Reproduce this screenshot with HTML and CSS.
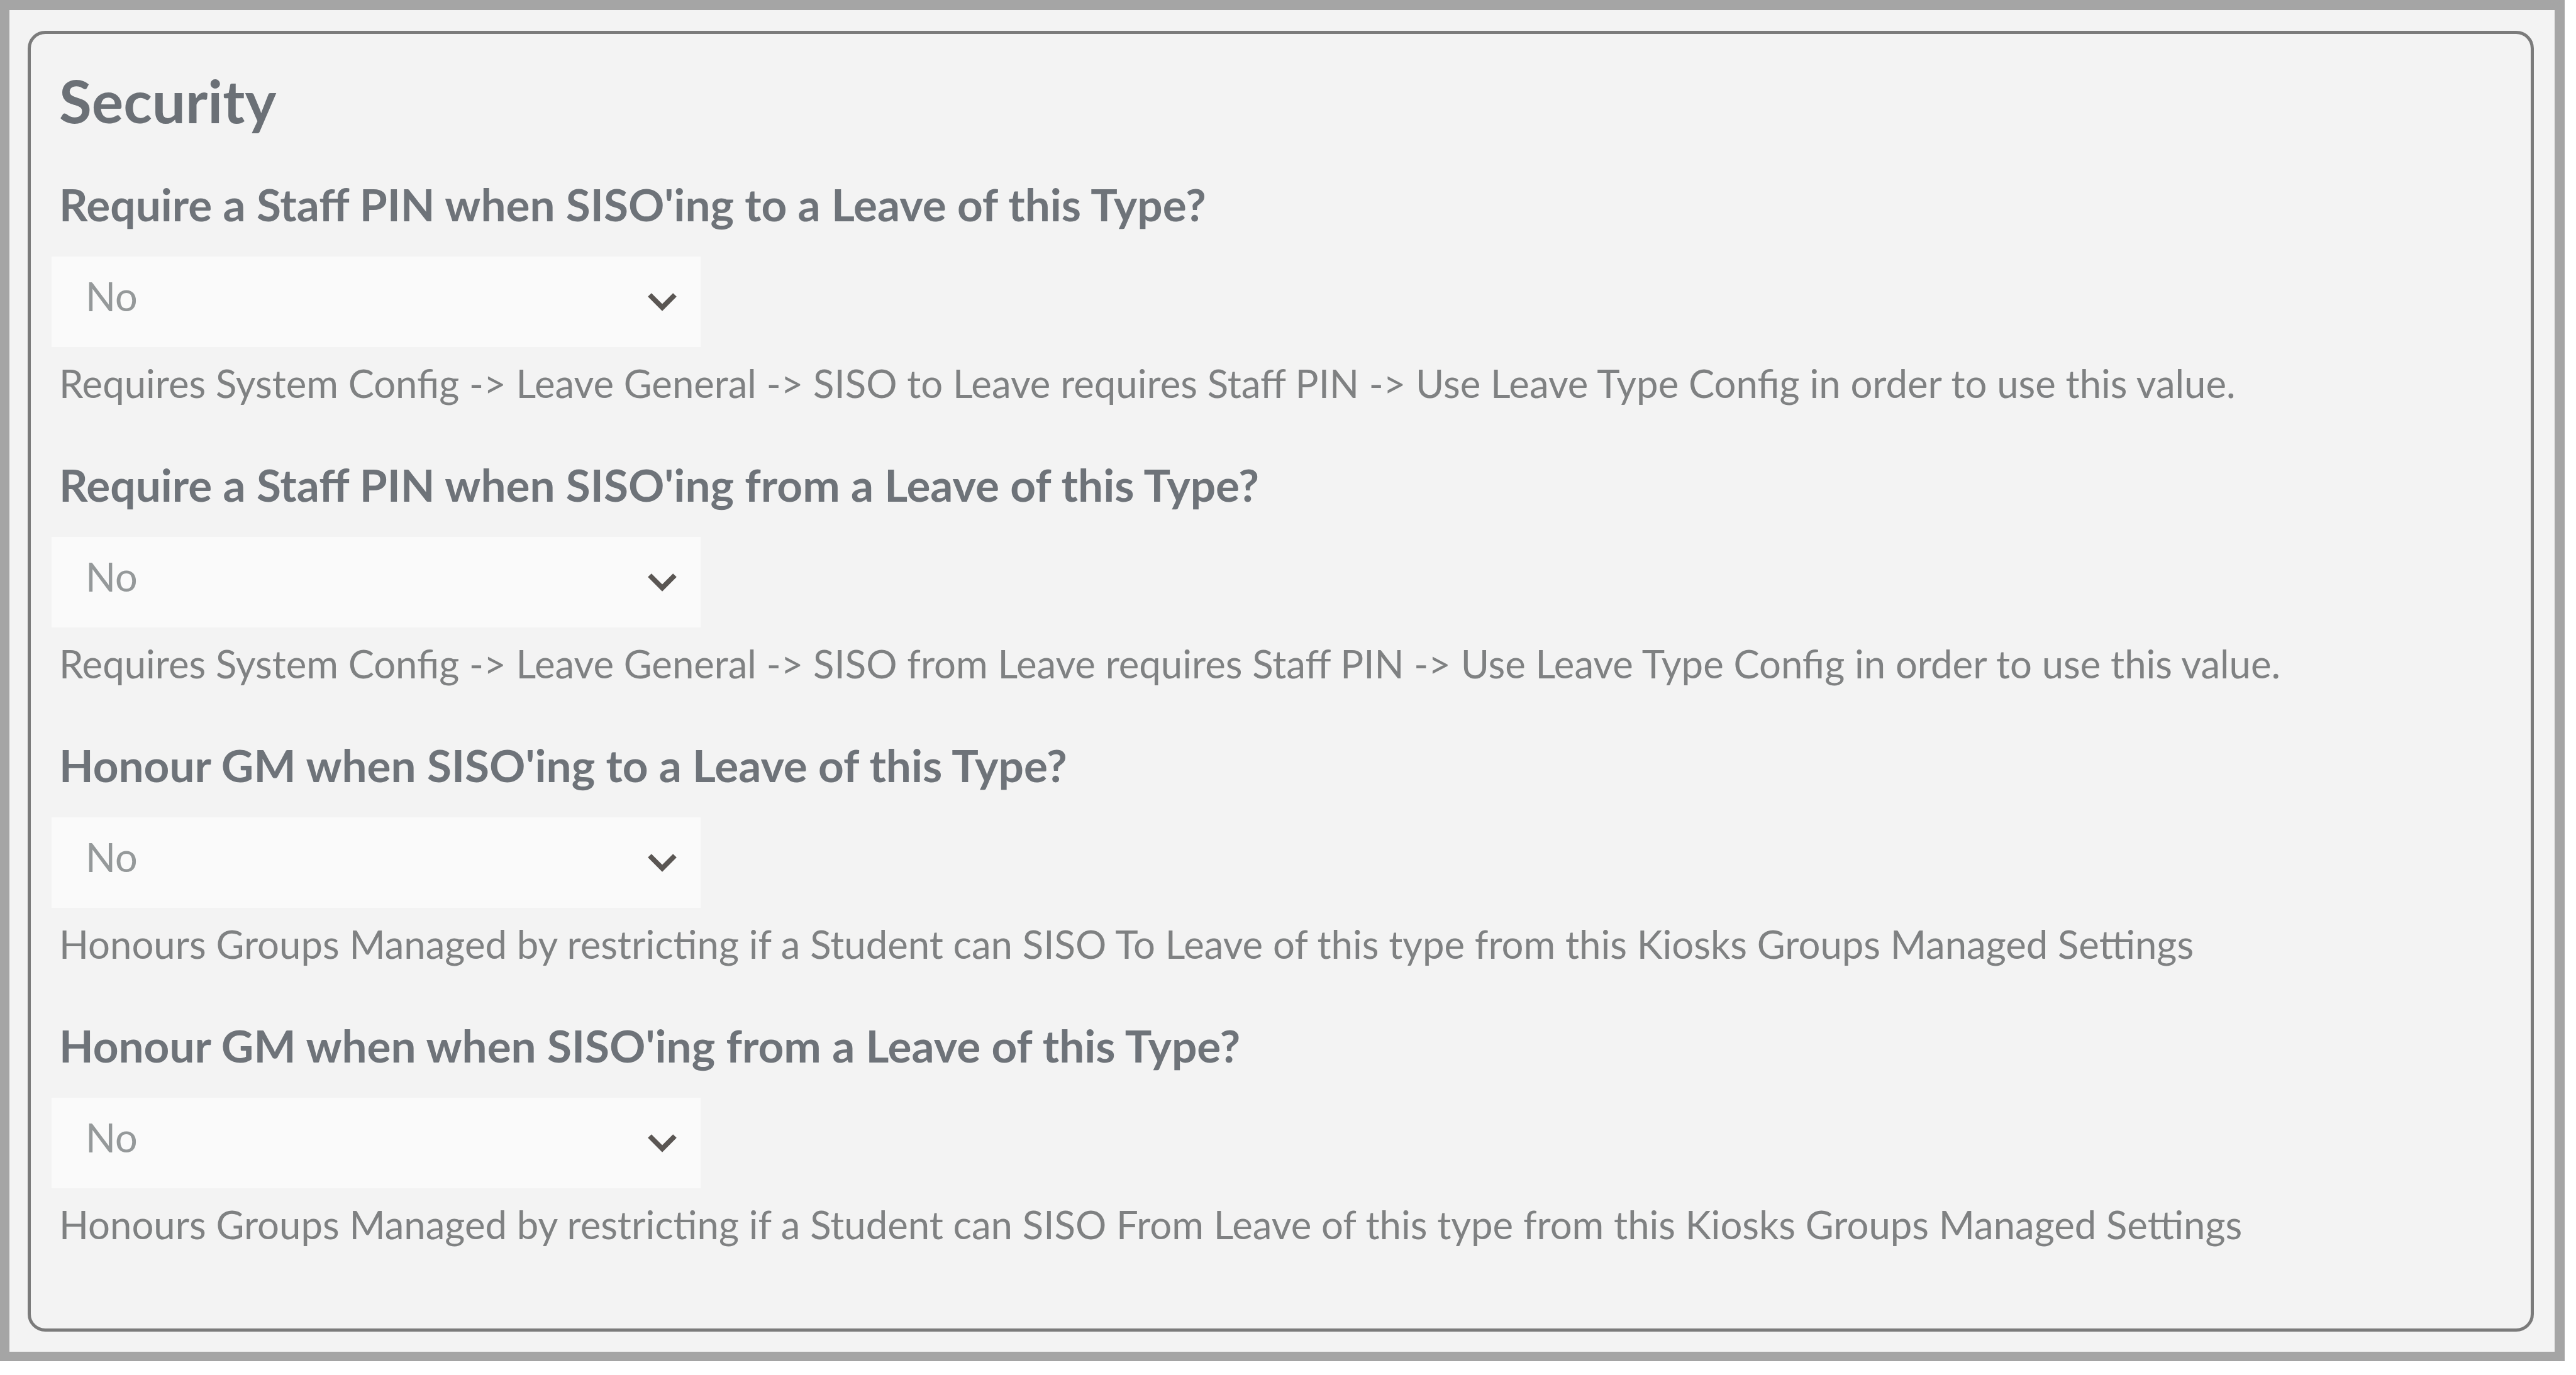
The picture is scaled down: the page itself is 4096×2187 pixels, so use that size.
FILE: index.html
```
<!DOCTYPE html>
<html lang="en">
<head>
    <meta charset="UTF-8">
    <title>Leave Type - Security</title>
    <link rel="stylesheet" href="styles.css">
</head>
<body>
    <div class="frame">
        <form class="panel">
            <h2>Security</h2>

            <div class="field">
                <label for="pin_to">Require a Staff PIN when SISO'ing to a Leave of this Type?</label>
                <div class="select" id="pin_to">
                    <span>No</span>
                    <svg class="chevron" viewBox="0 0 48 30"><path d="M4 4 L24 24 L44 4"/></svg>
                </div>
                <p class="help">Requires System Config -&gt; Leave General -&gt; SISO to Leave requires Staff PIN -&gt; Use Leave Type Config in order to use this value.</p>
            </div>

            <div class="field">
                <label for="pin_from">Require a Staff PIN when SISO'ing from a Leave of this Type?</label>
                <div class="select" id="pin_from">
                    <span>No</span>
                    <svg class="chevron" viewBox="0 0 48 30"><path d="M4 4 L24 24 L44 4"/></svg>
                </div>
                <p class="help">Requires System Config -&gt; Leave General -&gt; SISO from Leave requires Staff PIN -&gt; Use Leave Type Config in order to use this value.</p>
            </div>

            <div class="field">
                <label for="gm_to">Honour GM when SISO'ing to a Leave of this Type?</label>
                <div class="select" id="gm_to">
                    <span>No</span>
                    <svg class="chevron" viewBox="0 0 48 30"><path d="M4 4 L24 24 L44 4"/></svg>
                </div>
                <p class="help">Honours Groups Managed by restricting if a Student can SISO To Leave of this type from this Kiosks Groups Managed Settings</p>
            </div>

            <div class="field">
                <label for="gm_from">Honour GM when when SISO'ing from a Leave of this Type?</label>
                <div class="select" id="gm_from">
                    <span>No</span>
                    <svg class="chevron" viewBox="0 0 48 30"><path d="M4 4 L24 24 L44 4"/></svg>
                </div>
                <p class="help">Honours Groups Managed by restricting if a Student can SISO From Leave of this type from this Kiosks Groups Managed Settings</p>
            </div>
        </form>
    </div>
</body>
</html>
```
FILE: styles.css
```
* {
    box-sizing: border-box;
}
body {
    margin: 0;
    height: 2187px;
    background-color: #fff;
    font-family: Lato, sans-serif;
}
.frame {
    width: 4078px;
    height: 2165px;
    padding: 33px 33px 32px 29px;
    border: 16px solid #a5a5a5;
    border-left-width: 15px;
    border-bottom-width: 15px;
    background-color: #f3f3f3;
}
.panel {
    height: 100%;
    padding: 50px 34px 0 33px;
    border: 5px solid #7b7b7b;
    border-radius: 28px;
}
h2 {
    margin: 0 0 67px 12px;
    font-size: 94.5px;
    line-height: 112px;
    font-weight: 700;
    color: #6b7076;
}
.field {
    height: 446px;
}
label {
    display: block;
    margin-left: 12px;
    font-size: 71.1px;
    line-height: 84px;
    font-weight: 700;
    color: #6e7379;
}
.select {
    display: flex;
    justify-content: space-between;
    align-items: center;
    width: 1032px;
    height: 144px;
    margin-top: 41px;
    padding: 0 37px 0 54px;
    background-color: #fafafa;
    font-size: 63px;
    color: #95999a;
}
.select span {
    padding-bottom: 19px;
}
.chevron {
    width: 48px;
    height: 30px;
    fill: none;
    stroke: #5a5653;
    stroke-width: 8;
}
.help {
    margin: 19px 0 0 12px;
    font-size: 61.63px;
    line-height: 76px;
    color: #7f8182;
    white-space: nowrap;
}
```
